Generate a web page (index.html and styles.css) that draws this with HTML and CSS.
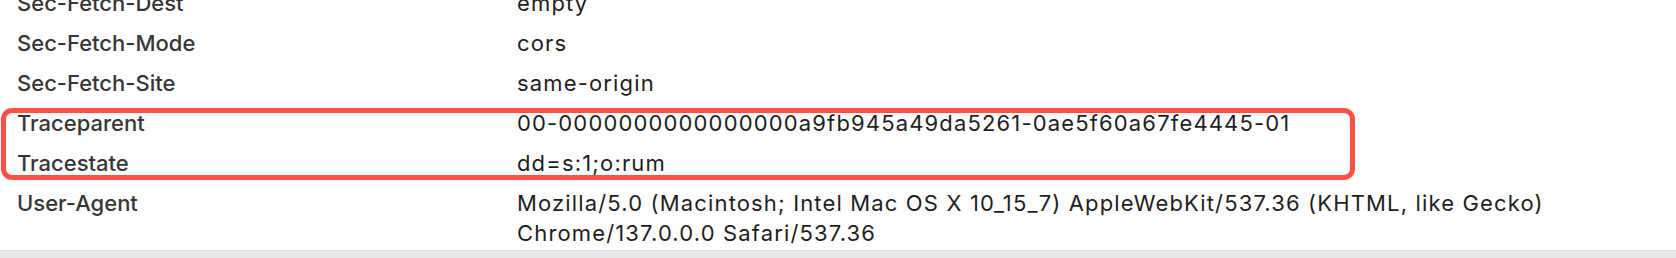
FILE: index.html
```html
<!DOCTYPE html>
<html lang="en">
<head>
    <meta charset="UTF-8">
    <title>Request Headers</title>
    <link rel="stylesheet" href="styles.css">
</head>
<body>
    <div class="headers">
        <div class="row">
            <div class="name">Sec-Fetch-Dest</div>
            <div class="value">empty</div>
        </div>
        <div class="row">
            <div class="name">Sec-Fetch-Mode</div>
            <div class="value">cors</div>
        </div>
        <div class="row">
            <div class="name">Sec-Fetch-Site</div>
            <div class="value">same-origin</div>
        </div>
        <div class="highlight">
            <div class="row">
                <div class="name">Traceparent</div>
                <div class="value">00-0000000000000000a9fb945a49da5261-0ae5f60a67fe4445-01</div>
            </div>
            <div class="row">
                <div class="name">Tracestate</div>
                <div class="value">dd=s:1;o:rum</div>
            </div>
        </div>
        <div class="row last">
            <div class="name">User-Agent</div>
            <div class="value">Mozilla/5.0 (Macintosh; Intel Mac OS X 10_15_7) AppleWebKit/537.36 (KHTML, like Gecko) Chrome/137.0.0.0 Safari/537.36</div>
        </div>
    </div>
    <div class="footer"></div>
</body>
</html>
```
FILE: styles.css
```css
html, body {
    margin: 0;
    height: 100%;
    overflow: hidden;
}
body {
    display: flex;
    flex-direction: column;
    background: #fff;
    font-family: Inter, "Noto Sans", sans-serif;
    font-size: 22px;
    color: #222;
}
.headers {
    margin-top: -17px;
}
.row {
    display: flex;
    padding: 5px 0 5px 17px;
    line-height: 30px;
}
.row.last {
    padding-bottom: 2px;
}
.name {
    flex: 0 0 500px;
    color: #363636;
    font-weight: 500;
}
.value {
    width: 1160px;
    color: #1e1e1e;
    letter-spacing: 1.15px;
}
.highlight {
    position: relative;
}
.highlight::after {
    content: '';
    position: absolute;
    left: 1px;
    top: 5px;
    width: 1354px;
    height: 72px;
    box-sizing: border-box;
    border: 5px solid #ff5048;
    border-radius: 11px;
}
.footer {
    flex: 1;
    background: #e8e8e8;
    border-top: 1px solid #dedede;
}
```
